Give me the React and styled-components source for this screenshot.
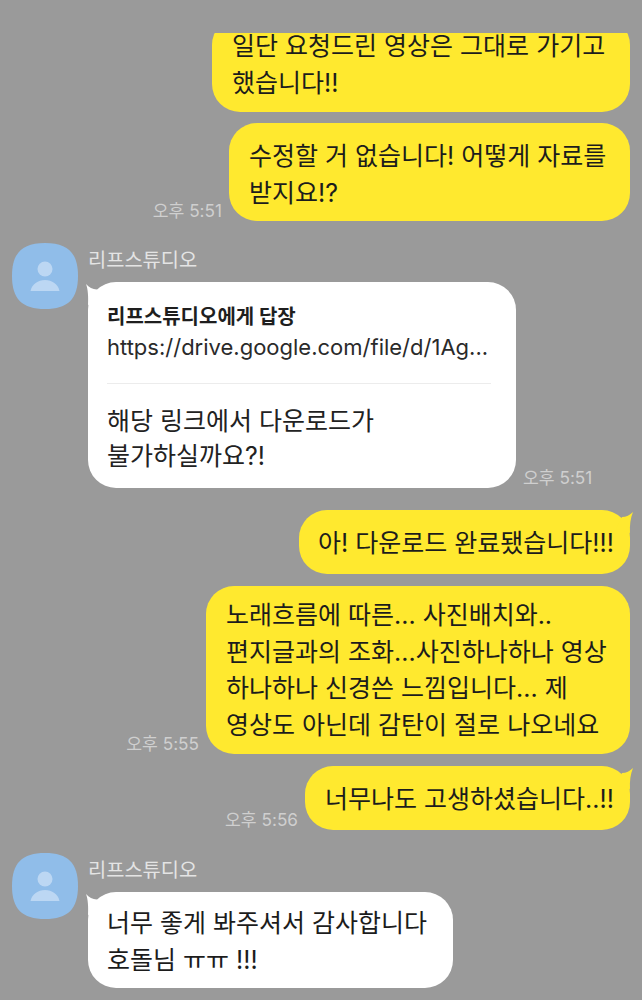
import React from 'react';
import styled, { createGlobalStyle } from 'styled-components';

const GlobalStyle = createGlobalStyle`
  html, body {
    margin: 0;
    padding: 0;
    background: #9a9a9a;
    font-family: Inter, "Noto Sans CJK KR", sans-serif;
  }
`;

const Page = styled.div`
  width: 642px;
  height: 1000px;
  padding-top: 33px;
  box-sizing: border-box;
  background: #9a9a9a;
  overflow: hidden;
`;

const ChatList = styled.div`
  height: 967px;
  overflow: hidden;
  display: flex;
  flex-direction: column;
`;

const SentRow = styled.div`
  display: flex;
  justify-content: flex-end;
  align-items: flex-end;
  gap: 7px;
  padding-right: 12px;
  margin-top: ${props => props.$top || 0}px;
`;

const ReceivedRow = styled.div`
  display: flex;
  align-items: flex-start;
  gap: 10px;
  padding-left: 12px;
  margin-top: ${props => props.$top || 0}px;
`;

const ReceivedBody = styled.div`
  display: flex;
  flex-direction: column;
`;

const SenderName = styled.div`
  height: 39px;
  padding-top: 4px;
  box-sizing: border-box;
  font-size: 19.8px;
  line-height: 26px;
  color: #e4e4e4;
`;

const ReceivedLine = styled.div`
  display: flex;
  align-items: flex-end;
  gap: 7px;
`;

const Bubble = styled.div`
  position: relative;
  box-sizing: border-box;
  width: ${props => props.$width}px;
  height: ${props => props.$height}px;
  margin-top: ${props => props.$shift || 0}px;
  padding: ${props => props.$pad || 15}px 0 0 ${props => props.$left || 20}px;
  border-radius: 28px;
  background: ${props => (props.$sent ? '#ffe92f' : '#ffffff')};
  color: #1c1c1c;
  font-size: 25px;
  line-height: 36.5px;
  white-space: nowrap;
`;

const TimeStamp = styled.div`
  font-size: 17.2px;
  line-height: 20px;
  color: #cfcfcf;
  white-space: nowrap;
`;

const ReplyTitle = styled.div`
  font-size: 20px;
  line-height: 26px;
  font-weight: 700;
  color: #1e1e1e;
`;

const ReplyLink = styled.div`
  margin-top: 1px;
  font-size: 22px;
  line-height: 32px;
  color: #2a2a2a;
`;

const ReplyDivider = styled.div`
  height: 1px;
  width: 384px;
  margin: 20px 0 20px;
  background: #ececec;
`;

const ReplyText = styled.div`
  font-size: 25px;
  line-height: 35px;
  color: #222222;
`;

const Tail = styled.svg`
  position: absolute;
  top: -1px;
  ${props => (props.$sent ? 'right: -5px;' : 'left: -3px;')}
  width: 24px;
  height: 24px;
`;

const SentTail = () => (
  <Tail $sent viewBox="0 0 24 24">
    <path d="M22 3 C 19 6, 15 8, 11 8 L 5 20 L 19 24 C 18.5 16, 19.5 9, 22 3 Z" fill="#ffe92f" />
  </Tail>
);

const ReceivedTail = () => (
  <Tail viewBox="0 0 24 24">
    <path d="M1 3 C 4 6.5, 8 8.5, 12 8.4 L 18 20 L 3 24 C 3.5 16, 3 8, 1 3 Z" fill="#ffffff" />
  </Tail>
);

const AvatarIcon = styled.svg`
  flex: none;
  width: 66px;
  height: 66px;
`;

const Avatar = () => (
  <AvatarIcon viewBox="0 0 66 66">
    <path
      d="M33 0 C 56 0, 66 10, 66 33 C 66 56, 56 66, 33 66 C 10 66, 0 56, 0 33 C 0 10, 10 0, 33 0 Z"
      fill="#90bde9"
    />
    <circle cx="33" cy="26" r="7.5" fill="#bcd7f3" />
    <path d="M18.5 48 C 20 41, 26 37, 33 37 C 40 37, 46 41, 47.5 48 Z" fill="#bcd7f3" />
  </AvatarIcon>
);

const App = () => {
  return (
    <Page>
      <GlobalStyle />
      <ChatList>
        <SentRow>
          <Bubble $sent $width={418} $height={95} $shift={-16} $pad={11}>
            일단 요청드린 영상은 그대로 가기고
            <br />
            했습니다!!
          </Bubble>
        </SentRow>
        <SentRow $top={11}>
          <TimeStamp>오후 5:51</TimeStamp>
          <Bubble $sent $width={401} $height={98}>
            수정할 거 없습니다! 어떻게 자료를
            <br />
            받지요!?
          </Bubble>
        </SentRow>

        <ReceivedRow $top={22}>
          <Avatar />
          <ReceivedBody>
            <SenderName>리프스튜디오</SenderName>
            <ReceivedLine>
              <Bubble $width={428} $height={206} $pad={22} $left={19}>
                <ReceivedTail />
                <ReplyTitle>리프스튜디오에게 답장</ReplyTitle>
                <ReplyLink>https://drive.google.com/file/d/1Ag...</ReplyLink>
                <ReplyDivider />
                <ReplyText>
                  해당 링크에서 다운로드가
                  <br />
                  불가하실까요?!
                </ReplyText>
              </Bubble>
              <TimeStamp>오후 5:51</TimeStamp>
            </ReceivedLine>
          </ReceivedBody>
        </ReceivedRow>

        <SentRow $top={22}>
          <Bubble $sent $width={331} $height={64} $left={19}>
            <SentTail />
            아! 다운로드 완료됐습니다!!!
          </Bubble>
        </SentRow>
        <SentRow $top={12}>
          <TimeStamp>오후 5:55</TimeStamp>
          <Bubble $sent $width={424} $height={168} $pad={11}>
            노래흐름에 따른... 사진배치와..
            <br />
            편지글과의 조화...사진하나하나 영상
            <br />
            하나하나 신경쓴 느낌입니다... 제
            <br />
            영상도 아닌데 감탄이 절로 나오네요
          </Bubble>
        </SentRow>
        <SentRow $top={12}>
          <TimeStamp>오후 5:56</TimeStamp>
          <Bubble $sent $width={325} $height={64}>
            <SentTail />
            너무나도 고생하셨습니다..!!
          </Bubble>
        </SentRow>

        <ReceivedRow $top={23}>
          <Avatar />
          <ReceivedBody>
            <SenderName>리프스튜디오</SenderName>
            <Bubble $width={365} $height={96} $pad={13} $left={19}>
              <ReceivedTail />
              너무 좋게 봐주셔서 감사합니다
              <br />
              호돌님 ㅠㅠ !!!
            </Bubble>
          </ReceivedBody>
        </ReceivedRow>
      </ChatList>
    </Page>
  );
};

export default App;
